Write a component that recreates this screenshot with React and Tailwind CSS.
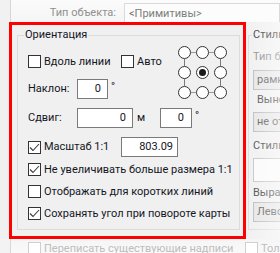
import React from 'react';

const Check = ({ checked, label, className = '', disabled }) => (
  <div className={`flex items-center h-[13px] ${className}`}>
    <span
      className={`w-[13px] h-[13px] shrink-0 border bg-white flex items-center justify-center ${
        disabled ? 'border-[#cfcfcf]' : 'border-[#333333]'
      }`}
    >
      {checked && (
        <svg width="11" height="11" viewBox="0 0 11 11">
          <path d="M1 5.5 L4 8.5 L10 2" fill="none" stroke="#3a3a3a" strokeWidth="1.1" />
        </svg>
      )}
    </span>
    <span className={`ml-[3px] whitespace-nowrap ${disabled ? 'text-[#bdbdbd]' : ''}`}>{label}</span>
  </div>
);

const Field = ({ value, className = '' }) => (
  <div
    className={`h-[20px] shrink-0 border border-[#7a7a7a] bg-white flex items-center justify-end ${className}`}
  >
    {value}
  </div>
);

const RadioGrid = () => {
  const cells = [];
  for (let r = 0; r < 5; r++) {
    for (let c = 0; c < 5; c++) {
      const key = `${r}-${c}`;
      if (r % 2 === 0 && c % 2 === 0) {
        const selected = r === 2 && c === 2;
        cells.push(
          <div
            key={key}
            className="w-[13px] h-[13px] rounded-full border border-[#333333] bg-white flex items-center justify-center"
          >
            {selected && <div className="w-[7px] h-[7px] rounded-full bg-[#1a1a1a]" />}
          </div>
        );
      } else if (r % 2 === 0 && r !== 2) {
        cells.push(
          <div key={key} className="flex items-center">
            <div className="h-px w-full bg-[#9a9a9a]" />
          </div>
        );
      } else if (c % 2 === 0 && r % 2 === 1 && c !== 2) {
        cells.push(
          <div key={key} className="flex justify-center">
            <div className="w-px h-full bg-[#7a7a7a]" />
          </div>
        );
      } else {
        cells.push(<div key={key} />);
      }
    }
  }
  return (
    <div className="ml-auto mr-[12px] grid grid-cols-[13px_5px_13px_5px_13px] grid-rows-[13px_7px_13px_7px_13px]">
      {cells}
    </div>
  );
};

const Combo = ({ text, className = '' }) => (
  <div
    className={`h-[20px] w-[180px] border border-[#bcbcbc] bg-[#e6e6e6] pl-[3px] flex items-center text-[#555] whitespace-nowrap ${className}`}
  >
    {text}
  </div>
);

export default function App() {
  return (
    <div className="w-[280px] h-[253px] overflow-hidden bg-[#f0f0f0] text-[11px] leading-[16px] text-[#14161f] font-['Roboto',sans-serif] flex flex-col">
      {/* top strip */}
      <div className="h-[22px] shrink-0 flex">
        <div className="w-[10px] bg-[#f1f1f1]" />
        <div className="flex-1 min-w-0 border-l border-[#d6d6d6] bg-gradient-to-b from-[#fbfbfb] to-[#f5f5f5] flex items-start">
          <span className="w-[105px] shrink-0 text-right mt-[5px] text-[#8f8f8f] whitespace-nowrap">
            Тип объекта:
          </span>
          <div className="ml-[8px] mt-[3px] h-[19px] flex-1 border border-b-0 border-[#dadada] bg-[#fcfcfc] pl-[4px] pt-[2px] text-[#7d7d7d] whitespace-nowrap">
            &lt;Примитивы&gt;
          </div>
        </div>
      </div>

      {/* middle */}
      <div className="h-[217px] shrink-0 flex">
        <div className="ml-[9px] w-[237px] shrink-0 border-[3px] border-[#ff0000]">
          <fieldset className="mt-[3px] ml-[5px] mr-[3px] h-[202px] border border-[#dcdcdc] min-w-0">
            <legend className="ml-[6px] px-[1px] leading-[14px]">Ориентация</legend>
            <div className="pl-[10px] pt-[4px] flex flex-col">
              <div className="flex items-start">
                <div className="flex flex-col">
                  <div className="flex mt-[9px]">
                    <Check label="Вдоль линии" className="w-[93px]" />
                    <Check label="Авто" />
                  </div>
                  <div className="flex items-center mt-[11px]">
                    <span className="w-[49px]">Наклон:</span>
                    <Field value="0" className="w-[31px] pr-[6px]" />
                    <span className="ml-[3px] -mt-[4px]">°</span>
                  </div>
                </div>
                <RadioGrid />
              </div>

              <div className="flex items-center mt-[9px]">
                <span className="w-[49px]">Сдвиг:</span>
                <Field value="0" className="w-[56px] pr-[6px]" />
                <span className="ml-[4px] w-[23px]">м</span>
                <Field value="0" className="w-[32px] pr-[7px]" />
                <span className="ml-[3px] -mt-[4px]">°</span>
              </div>

              <div className="flex items-center mt-[9px]">
                <Check checked label="Масштаб 1:1" className="w-[93px]" />
                <Field value="803.09" className="w-[57px] pr-[4px]" />
              </div>

              <Check checked label="Не увеличивать больше размера 1:1" className="mt-[6px]" />
              <Check label="Отображать для коротких линий" className="mt-[9px]" />
              <Check checked label="Сохранять угол при повороте карты" className="mt-[9px]" />
            </div>
          </fieldset>
        </div>

        <div className="flex-1 min-w-0 relative overflow-hidden">
          <fieldset className="mt-[6px] ml-[2px] w-[200px] h-[202px] border border-[#dcdcdc]">
            <legend className="ml-[3px] px-[1px] leading-[14px] text-[#333] whitespace-nowrap">
              Стиль надписи
            </legend>
            <div className="pl-[4px] flex flex-col">
              <span className="mt-[7px] text-[#8a8a8a] whitespace-nowrap">Тип блока</span>
              <Combo text="рамка" className="mt-[5px]" />
              <span className="mt-[2px] pl-[4px] text-[#444] whitespace-nowrap">Выноска</span>
              <Combo text="не отображать" className="mt-[4px]" />
              <span className="mt-[6px] text-[#444] whitespace-nowrap">Стиль</span>
              <div className="mt-[4px] h-[24px] w-[180px] border border-[#c4c4c4] bg-[#fafafa]" />
              <span className="mt-[3px] text-[#444] whitespace-nowrap">Выравнивание</span>
              <Combo text="Левое" className="mt-[1px]" />
            </div>
          </fieldset>
          <div className="absolute inset-0 bg-gradient-to-r from-transparent to-white/50" />
        </div>
      </div>

      {/* bottom strip */}
      <div className="flex-1 flex">
        <div className="w-[10px] bg-[#f3f3f3]" />
        <div className="flex-1 min-w-0 border-l border-[#d8d8d8] bg-gradient-to-b from-[#f5f5f5] to-[#fafafa] flex items-start pl-[17px] pt-[3px]">
          <Check disabled label="Переписать существующие надписи" className="w-[217px] shrink-0" />
          <Check disabled label="Только" />
        </div>
      </div>
    </div>
  );
}
